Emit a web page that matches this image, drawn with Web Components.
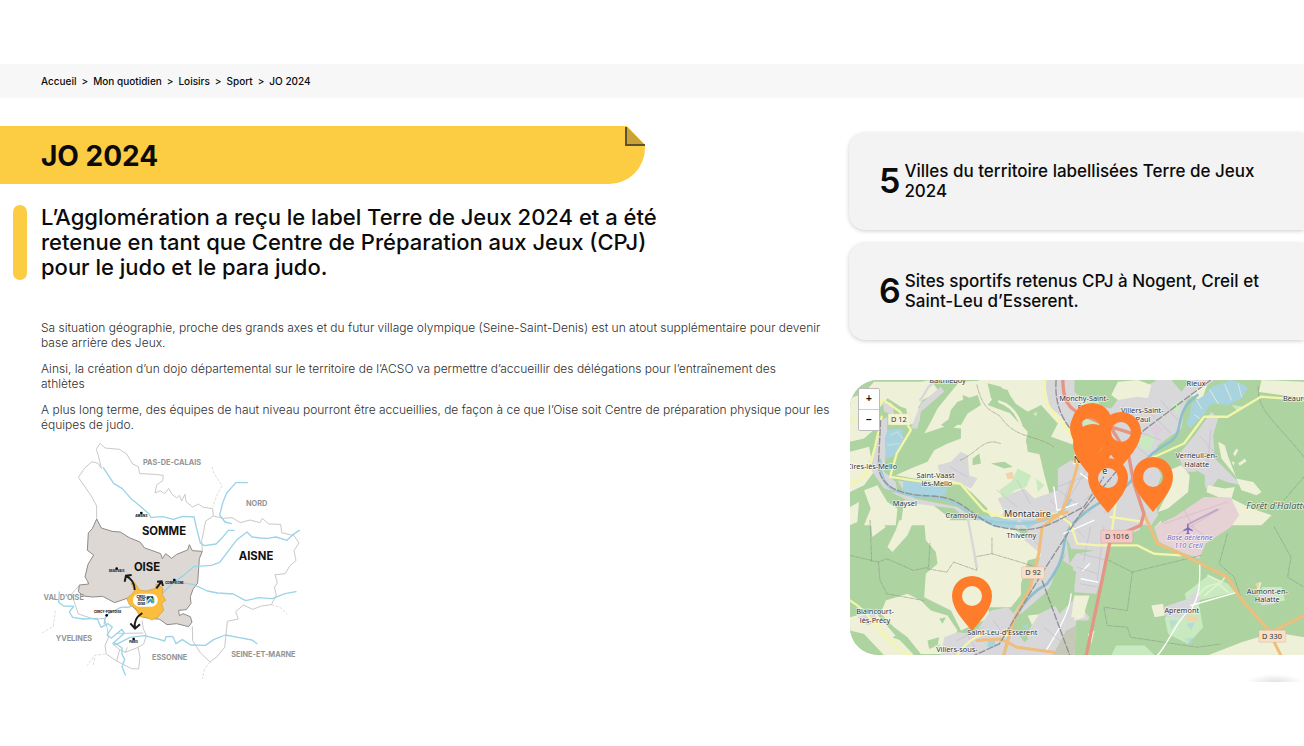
<!DOCTYPE html>
<html lang="fr">
<head>
<meta charset="utf-8">
<meta name="viewport" content="width=device-width, initial-scale=1">
<title>JO 2024</title>
<style>
    body {
        margin: 0;
        padding-top: 64px;
        background: #fff;
        color: #0b0b0b;
        font-family: Inter, "Liberation Sans", sans-serif;
        overflow-x: hidden;
    }
    main {
        display: grid;
        grid-template-columns: 65fr 35fr;
        gap: 4px;
        align-items: start;
    }
    article {
        padding-top: 28px;
    }
    aside {
        display: flex;
        flex-direction: column;
        padding-top: 35px;
    }
    .figures {
        display: grid;
        gap: 13px;
        margin-bottom: 40px;
    }
</style>
</head>
<body>
    <bread-crumb>
        <a href="#">Accueil</a>
        <a href="#">Mon quotidien</a>
        <a href="#">Loisirs</a>
        <a href="#">Sport</a>
        <a href="#" aria-current="page">JO 2024</a>
    </bread-crumb>
    <main>
        <article>
            <page-banner>JO 2024</page-banner>
            <lead-text>L’Agglomération a reçu le label Terre de Jeux 2024 et a été retenue en tant que Centre de Préparation aux Jeux (CPJ) pour le judo et le para judo.</lead-text>
            <rich-text>
                <p>Sa situation géographie, proche des grands axes et du futur village olympique (Seine-Saint-Denis) est un atout supplémentaire pour devenir base arrière des Jeux.</p>
                <p>Ainsi, la création d’un dojo départemental sur le territoire de l’ACSO va permettre d’accueillir des délégations pour l’entraînement des<br>athlètes</p>
                <p>A plus long terme, des équipes de haut niveau pourront être accueillies, de façon à ce que l’Oise soit Centre de préparation physique pour les équipes de judo.</p>
            </rich-text>
            <region-map></region-map>
        </article>
        <aside>
            <div class="figures">
                <key-figure value="5">Villes du territoire labellisées Terre de Jeux 2024</key-figure>
                <key-figure value="6">Sites sportifs retenus CPJ à Nogent, Creil et Saint-Leu d’Esserent.</key-figure>
            </div>
            <city-map>
                <map-pin x="222" y="23"></map-pin>
                <map-pin x="220" y="28"></map-pin>
                <map-pin x="223" y="44"></map-pin>
                <map-pin x="251" y="32"></map-pin>
                <map-pin x="238" y="78"></map-pin>
                <map-pin x="283" y="77"></map-pin>
                <map-pin x="102" y="196"></map-pin>
            </city-map>
            <button-shade></button-shade>
        </aside>
    </main>

<script>
class BreadCrumb extends HTMLElement {
    constructor() {
        super();
        this.attachShadow({ mode: 'open' }).innerHTML = `
            <style>
                :host { display: block; background: #f7f7f7; }
                nav {
                    display: flex;
                    align-items: center;
                    gap: 5px;
                    min-height: 34px;
                    padding-left: 41px;
                    font-size: 10px;
                    font-weight: 500;
                }
                ::slotted(a) { color: inherit; text-decoration: none; }
            </style>
            <nav aria-label="Fil d'Ariane"></nav>
        `;
    }

    connectedCallback() {
        // the light children are parsed by the time this script runs
        const nav = this.shadowRoot.querySelector('nav');
        nav.textContent = '';
        [...this.children].forEach((link, i) => {
            if (i) {
                const sep = document.createElement('span');
                sep.textContent = '>';
                nav.append(sep);
            }
            const slot = document.createElement('slot');
            slot.name = link.slot = 'item-' + i;
            nav.append(slot);
        });
    }
}

class PageBanner extends HTMLElement {
    constructor() {
        super();
        this.attachShadow({ mode: 'open' }).innerHTML = `
            <style>
                :host {
                    display: flex;
                    justify-content: space-between;
                    width: 76.3%;
                    min-height: 58px;
                    background: #fccc43;
                    border-bottom-right-radius: 36px;
                }
                h1 {
                    align-self: center;
                    margin: 0;
                    padding: 2px 0 0 41px;
                    font-size: 28px;
                    line-height: 34px;
                    font-weight: 700;
                }
                svg { display: block; width: 20px; height: 20px; }
            </style>
            <h1><slot></slot></h1>
            <svg viewBox="0 0 20 20" aria-hidden="true">
                <path d="M2 0H20V19Z" fill="#fff"/>
                <path d="M2 1V19H20Z" fill="#c9a338"/>
                <path d="M1 1V19H20" fill="none" stroke="#5a5136" stroke-width="2"/>
            </svg>
        `;
    }
}

class LeadText extends HTMLElement {
    constructor() {
        super();
        this.attachShadow({ mode: 'open' }).innerHTML = `
            <style>
                :host {
                    display: flex;
                    gap: 14px;
                    margin: 21px 0 40px 13px;
                }
                .bar { flex: none; width: 14px; border-radius: 7px; background: #fccc43; }
                p {
                    max-width: 630px;
                    margin: 0;
                    font-size: 22px;
                    line-height: 25px;
                    font-weight: 500;
                }
            </style>
            <span class="bar"></span>
            <p><slot></slot></p>
        `;
    }
}

class RichText extends HTMLElement {
    constructor() {
        super();
        this.attachShadow({ mode: 'open' }).innerHTML = `
            <style>
                :host {
                    display: grid;
                    gap: 11px;
                    max-width: 796px;
                    padding-left: 41px;
                    margin-right: -30px;
                    color: #2e2e2e;
                    font-size: 12px;
                    line-height: 15px;
                    font-weight: 300;
                }
                ::slotted(p) { margin: 0; }
            </style>
            <slot></slot>
        `;
    }
}

class KeyFigure extends HTMLElement {
    constructor() {
        super();
        this.attachShadow({ mode: 'open' }).innerHTML = `
            <style>
                :host {
                    display: flex;
                    align-items: center;
                    gap: 4px;
                    box-sizing: border-box;
                    min-height: 97px;
                    padding: 0 30px 2px;
                    background: #f3f3f3;
                    border-radius: 16px 0 0 16px;
                    box-shadow: 0 1px 4px rgba(0, 0, 0, 0.2);
                }
                strong { font-size: 34px; line-height: 40px; font-weight: 600; }
                p {
                    max-width: 368px;
                    margin: 0;
                    font-size: 17px;
                    line-height: 20px;
                    font-weight: 500;
                }
            </style>
            <strong></strong>
            <p><slot></slot></p>
        `;
    }

    connectedCallback() {
        this.shadowRoot.querySelector('strong').textContent = this.getAttribute('value');
    }
}

class RegionMap extends HTMLElement {
    constructor() {
        super();
        this.attachShadow({ mode: 'open' }).innerHTML = `
            <style>
                :host { display: block; margin: 10px 0 0 41px; }
                svg { display: block; width: 260px; height: 237px; overflow: visible; }
                .limit { fill: none; stroke: #c9c9c9; stroke-width: 3; stroke-linejoin: round; }
                .far { stroke: #dedede; stroke-dasharray: 9 4; }
                .river { fill: none; stroke: #9bd3e8; stroke-width: 4; stroke-linecap: round; stroke-linejoin: round; }
                text { font-weight: 700; text-anchor: middle; }
                .near { font-size: 34px; fill: #111; font-weight: 700; }
                .out { font-size: 22px; fill: #949494; }
                .town { font-size: 9px; fill: #222; font-weight: 800; }
                .arrow { fill: none; stroke: #1b1b1b; stroke-width: 6; }
            </style>
            <svg viewBox="33 24 780 711" role="img" aria-label="Carte de l'Oise et des départements voisins">
                <path class="limit" d="M200 255V216L184 186 145 130 165 101 186 83 204 88 214 103 205 65 199 46 210 28 225 42 268 46 290 60 308 90 325 98 329 119 374 121 400 124 398 140 380 153 375 177 391 170 404 179 416 163 426 181 440 192 448 184 455 201 465 181 468 203 488 219 505 210 520 220 548 224 550 246 527 261 521 292 515 320 517 350"/>
                <path class="limit" d="M550 246 579 253 606 251 631 266 660 258 690 266 697 253 716 270 752 271 755 296 792 305 807 327 792 350 798 380 779 396 766 419 735 422 742 447 733 460 739 483 724 512 695 516 668 526 640 513 617 533 625 555 592 562 588 602 584 640 562 667 540 684 511 656 488 620 487 577"/>
                <path class="limit far" d="M546 98 552 118 576 155 562 181 548 218"/>
                <path class="limit far" d="M724 512 750 520 772 540M540 684 524 704 517 735M76 530 70 577 36 597M226 660 194 664 171 695M194 672 190 694"/>
                <path class="limit" d="M147 455 125 480 136 513 145 540 194 556 223 553 232 584 235 612 225 635 229 660 260 681 305 704 326 705M336 560 340 585 349 605 341 630 324 640 330 668 326 705M262 598 287 598 340 597M248 630 269 647 260 681M269 647 286 655 324 640M286 655 292 640"/>
                <path d="M200 255 214 282 246 292 271 294 298 311 330 324 344 342 362 348 392 359 397 374 407 359 425 373 440 361 473 348 478 332 487 350 517 352 508 374 503 447 489 466 481 488 483 508 469 527 446 529 448 545 459 539 481 548 486 564 476 578 440 569 411 572 389 556 340 550 300 509 291 493 254 506 218 487 188 489 161 486 145 473 148 453 176 450 172 440 165 429 174 391 191 363 172 349 175 297 187 284Z" fill="#ddd8d4" stroke="#8f8b88" stroke-width="3"/>
                <path class="river" d="M220 101 251 148 277 164 305 196 330 216 357 240 362 250 398 248 430 256 458 247 492 249 499 280 511 327 523 335 558 330 575 313 595 289 612 289"/>
                <path class="river" d="M652 146H618L590 177 579 204 569 243 585 264 604 269"/>
                <path class="river" d="M394 481 423 453 438 440 461 424 491 398 544 394 569 385 594 352 621 317 651 294 666 309 692 312 712 313 738 309 771 319 790 301 808 289"/>
                <path class="river" d="M430 433 455 446 491 452 532 471 563 477 610 480 647 500 687 491 727 494 765 479 798 473"/>
                <path class="river" d="M88 474 86 505 101 516 131 517 118 534 128 550 159 555 201 553 213 580 234 569 247 579 231 603 244 612 276 586 283 598 249 628 258 632 300 610 344 605 380 614 404 621 408 608 428 607 438 629 457 617 482 633 526 634 551 617 586 603 628 611 666 618 681 629"/>
                <path class="river" d="M223 569C224 531 252 536 267 523C278 515 290 524 303 517M255 627 276 642 276 661 284 676 276 698 286 723"/>
                <path d="M303 449 313 445 328 468 349 471 377 463 379 450 399 463 397 482 407 499 395 508 401 528 384 549 366 558 351 551 329 548 318 525 298 512 290 493 304 482 315 468Z" fill="#fbbd3d" stroke="#d99b2a" stroke-width="2"/>
                <rect x="309" y="479" width="74" height="39" rx="19" fill="#fff"/>
                <text x="334" y="492" font-size="10">CREIL</text>
                <text x="334" y="502" font-size="10">SUD</text>
                <text x="334" y="512" font-size="10">OISE</text>
                <path d="M350 487H370V497L361 489 350 500Z" fill="#1c3557"/>
                <path d="M349 508 361 493 373 508H364L361 502 356 508Z" fill="#2e9fd8"/>
                <path d="M363 496 373 491V508Z" fill="#69b643"/>
                <path d="M349 501 354 497 354 509H349Z" fill="#f1c431"/>
                <path class="arrow" d="M314 468C314 447 302 432 288 426M284 443 288 425 305 423M379 463 394 443M381 443 395 442 399 456M337 537C316 550 312 567 315 583M301 568 315 584 330 571"/>
                <circle cx="334" cy="237" r="4"/><circle cx="260" cy="404" r="4"/><circle cx="433" cy="438" r="4"/><circle cx="230" cy="544" r="4"/><circle cx="311" cy="615" r="4"/>
                <text class="town" x="334" y="249">AMIENS</text>
                <text class="town" x="260" y="415">BEAUVAIS</text>
                <text class="town" x="433" y="450">COMPIÈGNE</text>
                <text class="town" x="233" y="538">CERGY-PONTOISE</text>
                <text class="town" x="311" y="627">PARIS</text>
                <text class="near" x="402" y="302">SOMME</text>
                <text class="near" x="351" y="411">OISE</text>
                <text class="near" x="678" y="378">AISNE</text>
                <text class="out" x="426" y="92">PAS-DE-CALAIS</text>
                <text class="out" x="680" y="217">NORD</text>
                <text class="out" x="101" y="499">VAL D’OISE</text>
                <text class="out" x="132" y="622">YVELINES</text>
                <text class="out" x="419" y="677">ESSONNE</text>
                <text class="out" x="700" y="670">SEINE-ET-MARNE</text>
            </svg>
        `;
    }
}

class CityMap extends HTMLElement {
    constructor() {
        super();
        this.attachShadow({ mode: 'open' }).innerHTML = `
            <style>
                :host {
                    display: block;
                    position: relative;
                    height: 275px;
                    margin-left: 1px;
                    overflow: hidden;
                    background: #add3a1;
                    border-radius: 28px 0 0 28px;
                }
                svg { display: block; width: 100%; height: 100%; }
                .zoom {
                    position: absolute;
                    top: 8px;
                    left: 8px;
                    display: grid;
                    border: 1px solid #bbb;
                    border-radius: 2px;
                    overflow: hidden;
                }
                button {
                    width: 20px;
                    height: 20px;
                    padding: 0;
                    border: 0;
                    background: #fff;
                    color: #111;
                    font: 700 10px/20px "Liberation Sans", sans-serif;
                }
                button + button { height: 21px; border-top: 1px solid #ccc; }
                .field { fill: #eef0d7; }
                .wood { fill: #add3a1; }
                .town { fill: #d8d7da; }
                .park { fill: #c9eac0; }
                .water { fill: #a9d3df; }
                .line { fill: none; stroke-linejoin: round; stroke-linecap: round; }
                .stream { stroke: #a0ccd8; stroke-width: 8; }
                .yellow { stroke: #f5f5a8; stroke-width: 7; }
                .orange { stroke: #f0bd7b; stroke-width: 9; }
                .red { stroke: #e59583; stroke-width: 10; }
                .white { stroke: #fff; stroke-width: 4; }
                .lane { stroke: #c5bfc9; stroke-width: 2; }
                .rail { stroke: #909094; stroke-width: 4; stroke-linecap: butt; stroke-dasharray: 22 4; }
                .path { stroke: #8d9c86; stroke-width: 2; stroke-dasharray: 9 4 2 4; }
                text {
                    font: 22px "Noto Sans", sans-serif;
                    fill: #333;
                    stroke: rgba(255, 255, 255, 0.7);
                    stroke-width: 4px;
                    paint-order: stroke;
                    text-anchor: middle;
                }
                .city { font-size: 27px; }
                .forest { font-size: 28px; font-style: italic; fill: #47604a; text-anchor: start; }
                .air { font-style: italic; fill: #7c69c0; }
                .shield text { font-size: 22px; stroke: none; }
            </style>
            <svg viewBox="0 0 1359 825" preserveAspectRatio="xMinYMin slice" role="img" aria-label="Carte du bassin creillois">
                <rect class="wood" width="1800" height="825"/>

                <!-- north west -->
                <g transform="translate(-18 -15)">
                    <path class="field" d="M18 70 60 55 90 20H230L260 15 285 50 235 75 215 110 170 95 130 70 80 130 100 155 60 190 18 200ZM18 230 75 215 90 290 60 330 18 350ZM185 95 230 100 225 140 195 150ZM280 100 345 20 430 15 450 65 430 90 500 115 550 170 545 205 580 215 600 300 625 390 560 420 440 425 390 360 350 325 240 315 155 300 200 280 250 260 270 225 310 205 350 190 350 160 300 155 240 175 260 140ZM400 15H600L625 90 690 160 690 210 620 185 640 145 590 90 550 110 505 80 490 45 430 30ZM60 345 100 330 130 380 160 400 155 450H60L80 400ZM180 375 260 385 320 430 300 450H170ZM18 395 45 380 40 440 18 450Z"/>
                    <path class="wood" d="M340 80 400 60 410 90 370 115 350 150 310 145 320 105ZM355 60 380 70 360 100ZM385 250 405 235 410 265 385 270ZM290 150 330 120 350 140 320 165ZM430 25 470 35 500 65 530 110 545 150 520 140 480 95 440 70ZM545 190 560 170 600 165 625 200 650 210 655 260 620 310 625 290 600 240 550 230ZM440 265 480 260 505 275 480 280ZM205 360 230 330 280 345 330 330 380 350 430 400 420 440 360 400 320 375Z"/>
                    <path d="M465 80C500 90 520 120 530 150M18 130C90 130 70 60 100 45" class="line" stroke="#eef0d7" stroke-width="8"/>
                    <path class="town" d="M105 140 130 125 128 200 120 290 155 320 160 350 120 340 85 290 75 260 95 220ZM280 270 320 260 350 230 370 240 375 300 400 310 380 340 340 320 290 305ZM460 370 540 340 570 370 640 345 640 280 680 255 740 280V460H440L480 410ZM230 85 290 35 300 50 230 110 220 160 200 160ZM600 15H740V170L690 180 650 125 615 95ZM160 315 185 320 180 350ZM140 350 200 355 210 370 340 395 420 450H385L330 400 210 385ZM115 75 145 85 150 120 120 110Z"/>
                    <path class="park" d="M465 345 500 320 520 280 560 300 545 335 510 345 480 375ZM575 310 600 330 580 350ZM565 115 580 110 575 125Z"/>
                    <path fill="#f2d3ad" d="M483 295 505 290 508 310 490 312Z"/>
                    <path class="water" d="M130 165 175 160 180 205 145 245 125 250 122 190ZM180 310 215 320 310 340 300 365 210 360 175 345ZM395 420 490 430 480 450H400Z"/>
                    <path d="M140 180 160 170 175 190M130 210 165 205" class="line" stroke="#c2e6dc" stroke-width="3"/>
                </g>

                <!-- north east -->
                <g transform="translate(672 -15)">
                    <path class="town" d="M0 80 110 100 140 60 220 30 250 15H360L330 90 320 160 250 210 235 250 260 300 240 360 250 420 230 450H0ZM360 180 410 110 430 130 415 180 420 250 480 310 500 330 455 320 430 310 400 350 370 290 330 290 310 240ZM240 15H420L385 40 330 80Z"/>
                    <path class="field" d="M110 60 130 20 190 15 230 30 220 70 190 65 130 75ZM270 290 320 270 345 300 340 350 280 400 250 410 280 350ZM395 350 400 330 450 340 480 335 470 370 430 365ZM430 200 450 210 460 245 470 270 485 310 535 320 560 350 545 360 500 345 480 300 440 250ZM470 370 530 400 590 420 560 450H470ZM350 60 380 30 400 20 380 80ZM540 15H560L687 20V70L550 50Z"/>
                    <path class="wood" d="M350 330 365 285 390 300 390 345 350 385ZM415 15H560L550 60 470 105 430 120ZM0 15H105L90 55 20 70 0 50ZM290 15H345L320 50Z"/>
                    <path class="field" d="M475 235 485 220 490 225 480 245ZM490 265 510 250 515 258 495 272ZM470 258 480 262 476 272Z"/>
                    <path class="park" d="M470 90 510 95 490 110ZM190 190 240 175 230 225 200 220ZM290 90 320 75 310 120ZM20 75 70 80 110 130 90 180 30 160Z"/>
                    <path fill="#dfcede" d="M230 165 245 145 265 165 240 190Z"/>
                    <path class="water" d="M350 85 390 60 410 35 470 15 510 30 520 40 500 70 460 90 410 85 385 120 345 160 335 145 345 125Z"/>
                    <path d="M365 75 380 100M405 45 430 85M450 30 470 75M490 25 500 65M360 120 375 130" class="line" stroke="#d6e9dc" stroke-width="3"/>
                </g>

                <!-- south west -->
                <g transform="translate(-18 420)">
                    <path class="field" d="M80 0H110L125 20 85 50ZM165 0H210L190 45 145 95 130 80 155 30ZM240 0H470L560 60 600 90 570 160 540 210 500 260 430 260 440 290 350 330 320 270 240 230 245 160 280 130 275 95 245 60ZM125 240 190 220 230 240 260 270 310 285 340 330 300 400H230L190 350 150 320 110 280ZM18 290 90 270 150 340 210 404H120L60 340 18 330ZM500 220 520 215 515 235 495 240ZM550 285 600 280 640 310 570 330Z"/>
                    <path class="wood" d="M250 360 285 350 280 375 255 385ZM285 295 305 290 295 310ZM145 350 165 340 170 360ZM550 120 590 110 590 160 560 210 530 240 530 190ZM470 345 490 350 480 365Z"/>
                    <path class="town" d="M300 350 340 335 390 340 440 270 490 260 520 290 500 330 560 330 610 350 700 350 710 404H290ZM560 0H740V80L680 90 660 150 600 220 530 280 500 290 560 200 590 100 540 60ZM40 290 90 275 100 300 70 315ZM560 330 600 290 680 290 690 350Z"/>
                    <path class="wood" d="M655 110 680 75 710 130 700 230 670 290 610 230 630 160ZM520 335 545 310 570 340 540 365Z"/>
                    <path class="park" d="M640 300 680 280 700 310 680 340ZM270 375 290 370 285 390Z"/>
                    <path class="water" d="M410 0H520L510 25 450 20ZM530 0H590L550 25ZM535 320 550 310 550 325ZM430 365 450 355 455 380 430 380Z"/>
                </g>

                <!-- Creil and the south east -->
                <g transform="translate(447 390)">
                    <path class="town" d="M180 0H430L420 60 330 90 320 160 290 250 225 245 220 170 190 150 210 100 180 60ZM120 310 220 260 270 320 220 434H110L80 370Z"/>
                    <path class="wood" d="M145 240 190 160 230 185 220 270 180 310ZM230 330 285 330 265 434H225ZM200 80 215 115 285 120 230 130 210 160Z"/>
                    <path class="field" d="M225 255 270 255 250 320 215 320ZM265 370 285 360 275 400Z"/>
                    <path fill="#c7c9b8" d="M200 360 230 345 225 434H160Z"/>
                    <path d="M245 205 295 215M270 160 250 180M215 250C210 310 170 370 140 420" class="line white"/>
                </g>
                <g transform="translate(672 420)">
                    <path class="field" d="M230 255 265 250 270 285 240 290ZM400 404 500 365 600 335 687 350V404ZM545 190 560 185 550 220ZM240 20 260 0 250 50ZM0 225 35 230 30 290 0 300Z"/>
                    <path class="park" d="M125 375H210L240 404H110ZM330 220 400 165 460 190 480 215 370 240 385 320 340 370 280 340 270 290 340 260ZM560 200 620 200 630 240 570 250Z"/>
                    <path class="town" d="M265 260 340 235 370 205 375 240 330 290 275 290ZM550 225 600 200 600 250 560 255Z"/>
                    <path class="water" d="M285 300 310 300 290 325ZM335 310 360 305 350 330ZM330 355 355 350 350 375Z" opacity=".6"/>
                    <path fill="#f2d3ad" d="M335 285 375 290 365 302 335 300ZM540 190 555 185 550 205Z"/>
                    <path class="line" d="M370 225C410 170 430 210 450 170M390 225 430 190 460 215M400 165 440 185" stroke="#dff4cb" stroke-width="5"/>
                </g>

                <!-- air base -->
                <path d="M925 430 970 410 1060 350 1140 352 1165 405 1140 440 1065 490 1045 535 990 515 925 485 910 440Z" fill="#e6d1d5"/>
                <path class="line" d="M940 430 1130 365M980 462 1110 385M1010 430 1080 480M1000 390 1030 440" stroke="#dbbfca" stroke-width="3"/>
                <path class="line" d="M1012 432 1100 388" stroke="#b8a3cc" stroke-width="5"/>

                <g class="line path">
                    <path d="M380 15C400 100 430 90 450 110 500 180 550 160 610 200M330 240C380 220 400 170 450 190M0 525 85 545 110 535 190 570 235 560 240 485M85 545 90 600 110 640 220 660M230 565 290 575 310 545 380 570 372 530 425 520 560 560M425 520V470M60 420 65 545"/>
                    <path d="M1222 20C1220 90 1260 110 1359 230M1359 290 1290 370M775 540 845 575 1050 525M845 575 830 690 760 680 770 735 830 740 840 770 1040 800 1110 790M1130 460 1105 550 1150 590 1170 650M1270 440 1320 530 1310 590 1359 620"/>
                </g>

                <g class="line stream">
                    <path d="M90 240C90 320 130 345 230 350 340 350 360 430 450 425 540 440 630 420 660 360"/>
                    <path d="M1040 45C960 100 1010 160 950 190 900 220 890 230 850 290 820 340 760 350 700 400 600 480 680 490 590 610 500 660 480 740 460 825" stroke="#8ebfca"/>
                </g>
                <g class="line lane">
                    <path d="M610 320 720 400M600 360 700 470M660 300 620 430M720 250 640 380M780 300 700 360M820 320 760 400M680 560 740 580M690 610 740 620M690 520 770 540M720 440 700 540M760 440 740 600M880 80 960 160M930 60 980 120M850 150 930 180M860 200 930 260M870 330 910 370M1050 170 1120 250M1080 150 1070 260M1010 220 1100 220M320 780 400 740M350 760 380 810M430 720 450 750M580 740 640 790M510 440 570 500M440 330 500 380M500 300 540 370M620 320 700 290M300 260 350 290"/>
                </g>
                <g class="line white">
                    <path d="M1047 550C1047 600 1050 640 1020 690 980 710 960 780 920 825M1020 675 1160 635M610 320 620 390 680 370M690 280 800 360M730 420 640 460"/>
                </g>
                <path class="line" d="M350 400 380 560M210 60C240 20 220 30 260 0" stroke="#d8d7da" stroke-width="7"/>
                <g class="line yellow">
                    <path d="M0 120C100 120 80 60 100 60L150 95 182 150 140 220 120 290 220 305 330 310 400 390 460 412 620 400"/>
                    <path d="M0 310C60 300 60 250 75 200L95 110M585 0C570 90 630 110 660 160L690 220 670 250"/>
                    <path d="M900 235 1000 190 1060 110 1130 110 1230 50 1359 60M900 235 860 280M800 330 790 410 780 480M620 400 660 430 680 490 740 495 860 495 910 520 990 525M780 410 880 425M0 660C70 700 90 780 180 825M320 825C350 780 400 740 470 765"/>
                </g>
                <g class="line orange">
                    <path d="M690 200 680 260 650 360 630 400 575 440 565 520 540 620 490 720 460 825M880 400 920 490 990 520 1050 550 1130 590 1170 655 1250 745 1290 825M1250 760 1359 705M560 420 650 395M380 780 450 775 500 800 610 815"/>
                </g>
                <g class="line red">
                    <path d="M637 0C640 90 660 90 780 140L835 230 850 310 880 400 870 435 780 475 745 645 707 825M780 140 860 165 820 110"/>
                </g>
                <g class="line rail">
                    <path d="M92 120 85 250C85 330 170 345 240 347 340 350 350 400 430 435 560 470 600 430 700 380L760 290M617 0C610 90 650 140 690 180M1080 0 880 150 830 205 700 250"/>
                    <path d="M800 270 690 400 580 570 447 790 370 825M575 600 658 825"/>
                </g>

                <g class="shield">
                    <rect x="114" y="101" width="66" height="34" rx="3" fill="#f5f3d3" stroke="#d6d3aa"/>
                    <text x="146" y="126">D 12</text>
                    <rect x="514" y="559" width="68" height="36" rx="3" fill="#f8dfc8" stroke="#d9a886"/>
                    <text x="548" y="585">D 92</text>
                    <rect x="751" y="450" width="95" height="37" rx="3" fill="#f5c8c1" stroke="#d99a92"/>
                    <text x="799" y="477">D 1016</text>
                    <rect x="1224" y="749" width="80" height="36" rx="3" fill="#f8dfc8" stroke="#d9a886"/>
                    <text x="1263" y="775">D 330</text>
                </g>
                <text x="292" y="9">Balthieboy</text>
                <text x="66" y="267">Cires-lès-Mello</text>
                <text x="256" y="292">Saint-Vaast</text>
                <text x="260" y="318">lès-Mello</text>
                <text x="164" y="377">Maysel</text>
                <text x="334" y="412">Cramoisy</text>
                <text class="city" x="531" y="409">Montataire</text>
                <text x="700" y="64">Monchy-Saint-</text>
                <text x="700" y="90">Éloi</text>
                <text x="875" y="99">Villers-Saint-</text>
                <text x="877" y="125">Paul</text>
                <text x="1036" y="19">Rieux</text>
                <text x="1296" y="62" style="text-anchor: start">Beaurepaire</text>
                <text x="1037" y="234">Verneuil-en-</text>
                <text x="1038" y="260">Halatte</text>
                <text class="city" x="680" y="247">N</text>
                <text class="city" x="763" y="281">e</text>
                <text class="forest" x="1186" y="387">Forêt d'Halatte</text>
                <path d="M1009 432 1013 432 1014 442 1026 449V453L1014 449 1014 457 1018 461H1005L1009 457V449L998 453V449L1009 442Z" fill="#8167c0"/>
                <text class="air" x="1017" y="480">Base aérienne</text>
                <text class="air" x="1013" y="504">110 Creil</text>
                <text x="513" y="472">Thiverny</text>
                <text x="75" y="700">Blaincourt-</text>
                <text x="75" y="726">lès-Précy</text>
                <text x="456" y="763">Saint-Leu-d'Esserent</text>
                <text x="320" y="815">Villers-sous-</text>
                <text x="993" y="696">Apremont</text>
                <text x="1249" y="640">Aumont-en-</text>
                <text x="1249" y="666">Halatte</text>
            </svg>
            <slot></slot>
            <div class="zoom">
                <button type="button" aria-label="Zoom avant">+</button>
                <button type="button" aria-label="Zoom arrière">−</button>
            </div>
        `;
    }
}

class MapPin extends HTMLElement {
    constructor() {
        super();
        this.attachShadow({ mode: 'open' }).innerHTML = `
            <style>
                :host { position: absolute; width: 40px; height: 55px; }
                svg { display: block; }
            </style>
            <svg width="40" height="55" viewBox="0 0 40 55" aria-hidden="true">
                <path fill="#ff7c2a" fill-rule="evenodd" d="M20 0A20 20 0 0 1 40 20C40 33 28 45 20 55C12 45 0 33 0 20A20 20 0 0 1 20 0ZM20 10A10 10 0 1 0 20 30A10 10 0 1 0 20 10Z"/>
            </svg>
        `;
    }

    connectedCallback() {
        this.style.left = this.getAttribute('x') + 'px';
        this.style.top = this.getAttribute('y') + 'px';
    }
}

// Top of the shadow cast by the floating button
class ButtonShade extends HTMLElement {
    constructor() {
        super();
        this.attachShadow({ mode: 'open' }).innerHTML = `
            <style>
                :host {
                    display: block;
                    align-self: flex-end;
                    width: 58px;
                    height: 8px;
                    margin-top: 19px;
                    background: radial-gradient(ellipse at bottom, #e2e2e2, #fff 70%);
                }
            </style>
        `;
    }
}

customElements.define('bread-crumb', BreadCrumb);
customElements.define('page-banner', PageBanner);
customElements.define('lead-text', LeadText);
customElements.define('rich-text', RichText);
customElements.define('key-figure', KeyFigure);
customElements.define('region-map', RegionMap);
customElements.define('city-map', CityMap);
customElements.define('map-pin', MapPin);
customElements.define('button-shade', ButtonShade);
</script>
</body>
</html>
